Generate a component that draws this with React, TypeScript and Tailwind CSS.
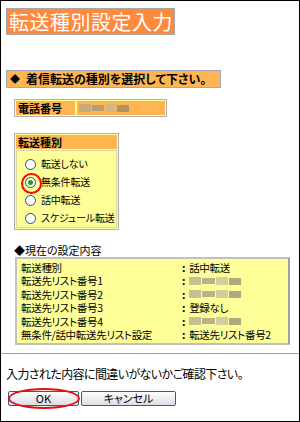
import React from "react";

const font = { fontFamily: '"Noto Sans CJK JP", "Noto Sans", sans-serif' };

function Blur({ w }: { w: number }) {
  return (
    <span className="inline-flex h-[9px] items-center gap-[1px] opacity-70" style={{ width: w }}>
      <span className="h-[8px] flex-1 bg-[#b0a890]" />
      <span className="h-[6px] flex-1 bg-[#9a9480]" />
      <span className="h-[8px] flex-1 bg-[#c0b8a0]" />
      <span className="h-[7px] flex-1 bg-[#8c8670]" />
    </span>
  );
}

function Radio({ checked }: { checked?: boolean }) {
  return (
    <span className="relative inline-flex h-[11px] w-[11px] shrink-0 items-center justify-center rounded-full border border-[#1c5180] bg-white">
      {checked && <span className="h-[5px] w-[5px] rounded-full bg-[#21a121]" />}
      {checked && (
        <span className="absolute left-[-5px] top-[-5px] h-[21px] w-[21px] rounded-full border-2 border-[#e01010]" />
      )}
    </span>
  );
}

export default function App() {
  const rows: [string, React.ReactNode][] = [
    ["転送種別", "話中転送"],
    ["転送先リスト番号1", <Blur w={52} />],
    ["転送先リスト番号2", <Blur w={52} />],
    ["転送先リスト番号3", "登録なし"],
    ["転送先リスト番号4", <Blur w={52} />],
    ["無条件/話中転送先リスト設定", "転送先リスト番号2"],
  ];
  return (
    <div
      className="box-border h-[422px] w-[300px] overflow-hidden border border-black bg-white text-black [font-feature-settings:'palt']"
      style={font}
    >
      <div className="ml-[5px] mt-[7px] flex h-[27px] w-[169px] items-center border border-[#a8a8a8] bg-[#ff8a3d] pl-[2px] text-[20px] leading-none tracking-[0.5px] text-white">
        転送種別設定入力
      </div>

      <div className="ml-[5px] mt-[35px] flex h-[18px] w-[215px] items-center whitespace-nowrap border border-[#a0a8c0] bg-[#ffb552] pl-[3px] text-[12px] font-bold leading-none">
        <span className="mr-[6px] text-[10px]">◆</span>着信転送の種別を選択して下さい。
      </div>

      <div className="ml-[13px] mt-[11px] flex h-[18px] w-[153px] gap-[2px] border border-[#b0b0b0] bg-[#ffff99] p-[1px]">
        <div className="flex w-[59px] items-center bg-[#ffb552] pl-[2px] text-[11px] font-bold leading-none">電話番号</div>
        <div className="flex flex-1 items-center bg-[#ffb552] pl-[2px]">
          <Blur w={50} />
        </div>
      </div>

      <div className="ml-[13px] mt-[16px] w-[105px] border border-[#b0b0b0] bg-[#ffff99] p-[1px]">
        <div className="flex h-[14px] items-center bg-[#ffb552] pl-[2px] text-[11px] font-bold leading-none">転送種別</div>
        <div className="mt-[1px] flex flex-col gap-[6px] border border-[#d8d8a0] pb-[3px] pl-[8px] pt-[7px] text-[10px] leading-[12px] tracking-[-0.2px]">
          {[
            ["転送しない", false],
            ["無条件転送", true],
            ["話中転送", false],
            ["スケジュール転送", false],
          ].map(([t, c]) => (
            <div key={t as string} className="flex items-center gap-[5px] whitespace-nowrap">
              <Radio checked={c as boolean} />
              <span>{t as string}</span>
            </div>
          ))}
        </div>
      </div>

      <div className="ml-[13px] mt-[13px] text-[11px] leading-[14px]">◆現在の設定内容</div>

      <div className="ml-[14px] mt-[0px] w-[275px] border-2 border-[#c0c0c0] border-r-[#a0a0a0] bg-[#ffff99] py-[2px] pl-[4px] text-[10.5px] leading-[13.4px] tracking-[-0.3px]">
        {rows.map(([l, v], i) => (
          <div key={i} className="flex h-[13.4px] items-center whitespace-nowrap">
            <span className="w-[161px] shrink-0">{l}</span>
            <span className="mr-[4px] font-bold">:</span>
            <span className="flex items-center">{v}</span>
          </div>
        ))}
      </div>

      <div className="mt-[8px] h-[1px] w-full bg-[#a0a0a0]" />

      <div className="ml-[5px] mt-[12px] whitespace-nowrap text-[12px] leading-[16px] tracking-[-0.6px]">
        入力された内容に間違いがないかご確認下さい。
      </div>

      <div className="ml-[7px] mt-[9px] flex gap-[2px] text-[11px]">
        <button className="relative flex h-[15px] w-[71px] items-center justify-center rounded-[2px] border border-[#3c5a88] bg-gradient-to-b from-white to-[#dcdce4] leading-none">
          OK
          <span className="absolute left-[-1px] top-[-4px] h-[21px] w-[72px] rounded-[50%] border-2 border-[#e01010]" />
        </button>
        <button className="flex h-[15px] w-[95px] items-center justify-center rounded-[2px] border border-[#3c5a88] bg-gradient-to-b from-white to-[#dcdce4] leading-none">
          キャンセル
        </button>
      </div>
    </div>
  );
}
